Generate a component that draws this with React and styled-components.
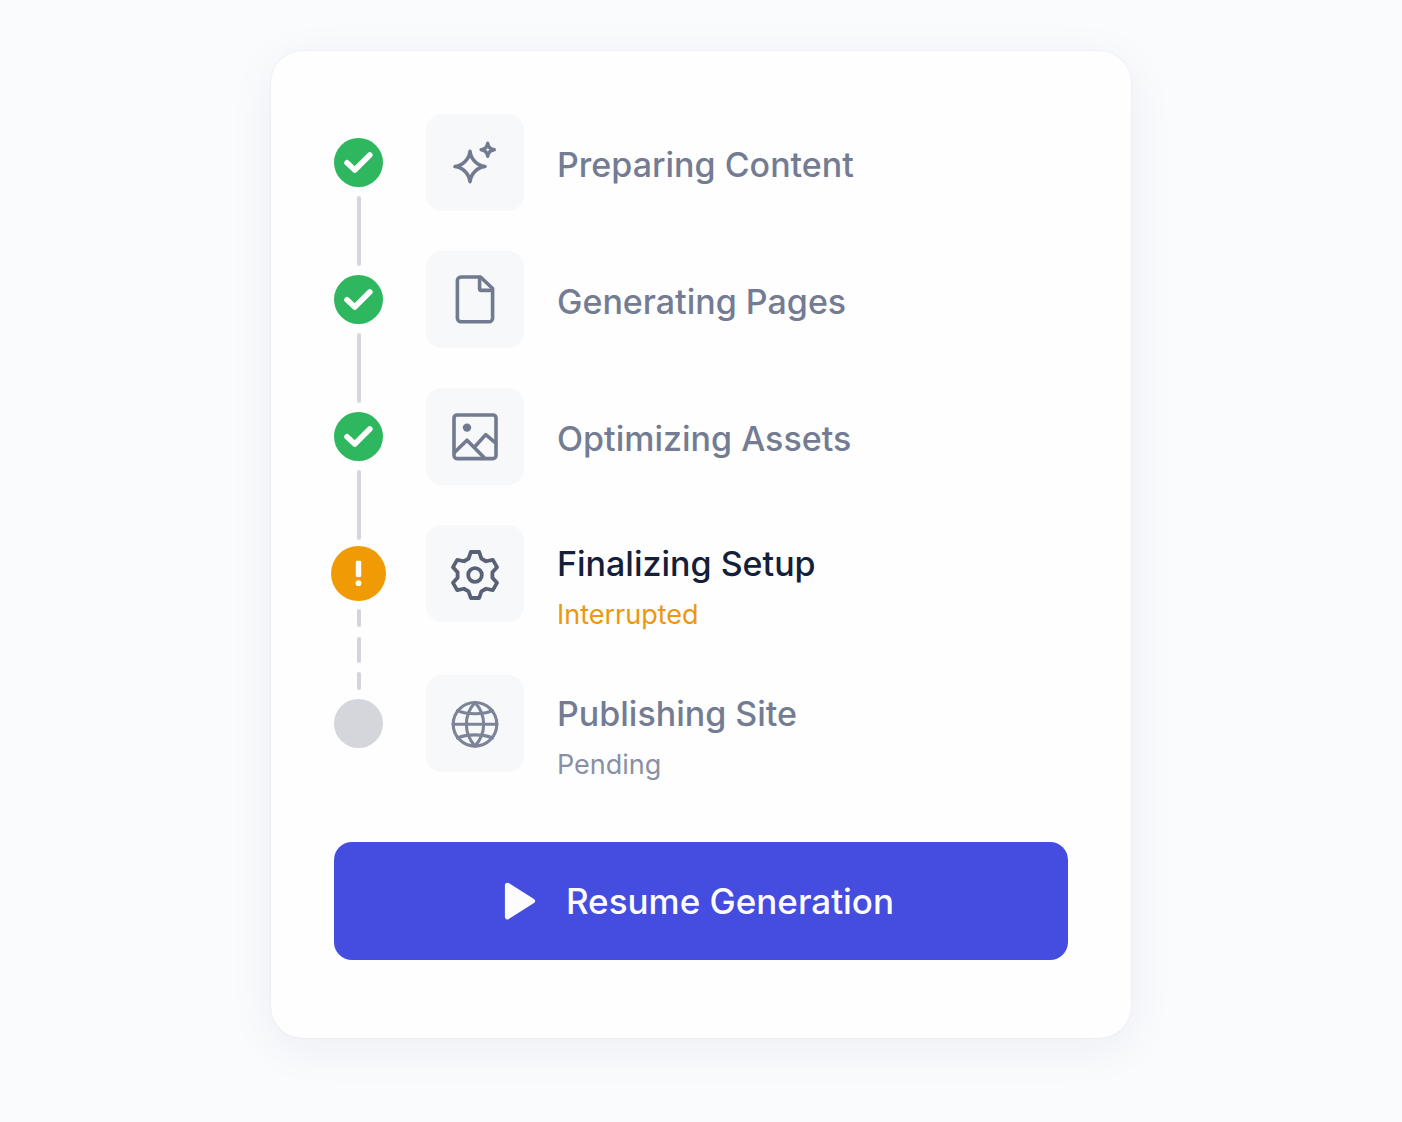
import React from "react";
import styled, { createGlobalStyle } from "styled-components";

const GlobalStyle = createGlobalStyle`
  *, *::before, *::after { box-sizing: border-box; }
  body {
    margin: 0;
    background: #fafbfd;
    font-family: Inter, "Liberation Sans", sans-serif;
  }
`;

const Page = styled.main`
  min-height: 100vh;
  padding: 51px 24px;
  display: flex;
  justify-content: center;
  align-items: flex-start;
`;

const Card = styled.section`
  width: 100%;
  max-width: 860px;
  padding: 63px 63px 78px;
  border-radius: 32px;
  background: #fefefe;
  box-shadow: 0 0 2px rgba(30, 41, 80, 0.08), 0 10px 48px rgba(30, 41, 80, 0.06);
`;

const StepList = styled.ol`
  margin: 0;
  padding: 0;
  list-style: none;
`;

const StepRow = styled.li`
  display: grid;
  grid-template-columns: 92px 131px minmax(0, 1fr);
  align-items: start;
`;

const Rail = styled.div`
  align-self: stretch;
  width: 49px;
  display: flex;
  flex-direction: column;
  align-items: center;
  padding-top: 24px;
  margin-bottom: ${(p) => (p.$last ? "0" : "-24px")};
`;

const markerColors = { done: "#2fb75f", warning: "#f09b06", pending: "#d5d6dc" };

const Marker = styled.span`
  flex: none;
  display: block;
  width: ${(p) => (p.$state === "warning" ? 55 : 49)}px;
  height: ${(p) => (p.$state === "warning" ? 55 : 49)}px;
  margin: ${(p) => (p.$state === "warning" ? "-3px" : "0")};
  border-radius: 50%;
  background: ${(p) => markerColors[p.$state]};

  svg { display: block; }
`;

const Connector = styled.span`
  flex: 1;
  width: 4px;
  margin: 9px 0;
  border-radius: 2px;
  background: #d6d6de;
`;

const DashedConnector = styled.span`
  flex: 1;
  display: flex;
  flex-direction: column;
  justify-content: space-between;
  margin: 11px 0 9px;
`;

const Dash = styled.span`
  width: 4px;
  height: ${(p) => (p.$long ? 26 : 18)}px;
  border-radius: 2px;
  background: #d3d5dd;
`;

const Tile = styled.span`
  display: flex;
  align-items: center;
  justify-content: center;
  width: 98px;
  height: 97px;
  border-radius: 16px;
  background: #f7f8fa;
  color: ${(p) => p.$color};
`;

const Body = styled.div`
  min-height: ${(p) => (p.$status ? "0" : "137px")};
  padding: ${(p) => (p.$status ? "17px" : "29px")} 0 ${(p) => (p.$status && !p.$last ? "42px" : "0")};
`;

const Title = styled.h2`
  margin: 0;
  font-size: 34px;
  line-height: 44px;
  font-weight: 500;
  color: ${(p) => (p.$active ? "#14203a" : "#737c92")};
`;

const Status = styled.p`
  margin: 11px 0 0;
  font-size: 27px;
  line-height: 36px;
  color: ${(p) => (p.$active ? "#ec9711" : "#8990a5")};
`;

const ResumeButton = styled.button`
  width: 100%;
  height: 118px;
  margin-top: 59px;
  padding: 0 28px 0 24px;
  display: flex;
  align-items: center;
  justify-content: center;
  gap: 30px;
  border: 0;
  border-radius: 18px;
  background: #444ddf;
  color: #fcfcff;
  font: inherit;
  font-size: 35px;
  line-height: 44px;
  font-weight: 500;
  cursor: pointer;
`;

const Icon = ({ children, width = 3.6 }) => (
  <svg width="52" height="52" viewBox="0 0 52 52" fill="none" stroke="currentColor"
    strokeWidth={width} strokeLinecap="round" strokeLinejoin="round" aria-hidden="true">
    {children}
  </svg>
);

const SparklesIcon = () => (
  <Icon>
    <path d="M21 14.4C22 22.4 28 28.5 36 29.5C28 30.5 22 36.6 21 44.6C20 36.6 14 30.5 6 29.5C14 28.5 20 22.4 21 14.4Z" />
    <path d="M38.7 6.2C39.2 10.2 41.3 12.3 45.3 12.8C41.3 13.3 39.2 15.4 38.7 19.4C38.2 15.4 36.1 13.3 32.1 12.8C36.1 12.3 38.2 10.2 38.7 6.2Z" strokeWidth="3.4" />
  </Icon>
);

const FileIcon = () => (
  <Icon>
    <path d="M31.5 3H12a3.6 3.6 0 0 0-3.6 3.6v37.6a3.6 3.6 0 0 0 3.6 3.6h28a3.6 3.6 0 0 0 3.6-3.6V14.5Z" />
    <path d="M30.6 3.4v11.4a1.6 1.6 0 0 0 1.6 1.6h11" />
  </Icon>
);

const ImageIcon = () => (
  <Icon>
    <rect x="5" y="4" width="42" height="43.6" rx="3" />
    <circle cx="18" cy="16.6" r="4.2" fill="currentColor" stroke="none" />
    <path d="M5.4 41.5L18 29.2L35 46.6M25.6 36L36.7 23.6L46.8 32.2" />
  </Icon>
);

const gearPath = (() => {
  const points = [];
  for (let i = 0; i < 6; i += 1) {
    const a = (i * Math.PI) / 3;
    [[-6.4, -16.4], [-4.2, -23], [4.2, -23], [6.4, -16.4]].forEach(([x, y]) => {
      const px = 26 + x * Math.cos(a) - y * Math.sin(a);
      const py = 27 + x * Math.sin(a) + y * Math.cos(a);
      points.push(`${px.toFixed(2)} ${py.toFixed(2)}`);
    });
  }
  return `M${points.join("L")}Z`;
})();

const GearIcon = () => (
  <Icon width={3.8}>
    <path d={gearPath} />
    <circle cx="26" cy="27" r="6.8" />
  </Icon>
);

const GlobeIcon = () => (
  <Icon width={3.1}>
    <circle cx="26" cy="26.3" r="21.8" />
    <path d="M26 4.5C14.5 17 14.5 35.6 26 48.1C37.5 35.6 37.5 17 26 4.5Z" />
    <path d="M4 26.3H48M8.5 12.6C18 16.8 34 16.8 43.5 12.6M8.5 40C18 35.8 34 35.8 43.5 40" />
  </Icon>
);

const CheckGlyph = () => (
  <svg width="49" height="49" viewBox="0 0 49 49" fill="none" aria-hidden="true">
    <path d="M13 24.8L20.8 32L35.8 17" stroke="#fff" strokeWidth="5.6" strokeLinecap="round" strokeLinejoin="round" />
  </svg>
);

const AlertGlyph = () => (
  <svg width="55" height="55" viewBox="0 0 55 55" fill="#fff" aria-hidden="true">
    <rect x="24.8" y="14.7" width="5.4" height="16.4" rx="1.4" />
    <circle cx="27.5" cy="37.2" r="2.9" />
  </svg>
);

const PlayGlyph = () => (
  <svg width="32" height="38" viewBox="0 0 32 38" fill="currentColor" stroke="currentColor" aria-hidden="true">
    <path d="M3.4 3.2L28.6 19L3.4 34.8Z" strokeWidth="5" strokeLinejoin="round" />
  </svg>
);

const steps = [
  { title: "Preparing Content", state: "done", icon: SparklesIcon },
  { title: "Generating Pages", state: "done", icon: FileIcon },
  { title: "Optimizing Assets", state: "done", icon: ImageIcon },
  { title: "Finalizing Setup", state: "warning", icon: GearIcon, status: "Interrupted" },
  { title: "Publishing Site", state: "pending", icon: GlobeIcon, status: "Pending" },
];

const iconColors = { done: "#727a90", warning: "#596177", pending: "#7d8498" };

function Step({ step, last }) {
  const { title, state, status, icon: StepIcon } = step;
  const active = state === "warning";
  return (
    <StepRow>
      <Rail $last={last}>
        <Marker $state={state}>
          {state === "done" && <CheckGlyph />}
          {active && <AlertGlyph />}
        </Marker>
        {!last && !active && <Connector />}
        {active && (
          <DashedConnector>
            <Dash />
            <Dash $long />
            <Dash />
          </DashedConnector>
        )}
      </Rail>
      <Tile $color={iconColors[state]}>
        <StepIcon />
      </Tile>
      <Body $status={Boolean(status)} $last={last}>
        <Title $active={active}>{title}</Title>
        {status && <Status $active={active}>{status}</Status>}
      </Body>
    </StepRow>
  );
}

export default function App() {
  return (
    <>
      <GlobalStyle />
      <Page>
        <Card>
          <StepList>
            {steps.map((step, i) => (
              <Step key={step.title} step={step} last={i === steps.length - 1} />
            ))}
          </StepList>
          <ResumeButton type="button">
            <PlayGlyph />
            Resume Generation
          </ResumeButton>
        </Card>
      </Page>
    </>
  );
}
